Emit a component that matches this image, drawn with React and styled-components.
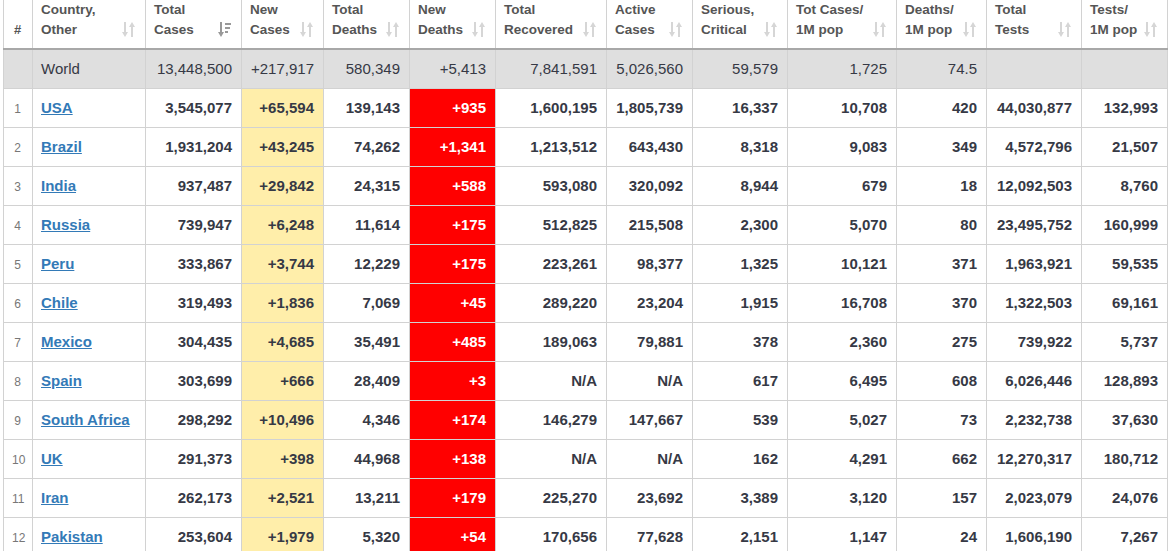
import React from "react";
import styled, { createGlobalStyle } from "styled-components";

const Global = createGlobalStyle`
  html, body { margin: 0; padding: 0; overflow: hidden; background: #fff; }
  body { font-family: "Liberation Sans", Arial, sans-serif; }
`;

const Wrap = styled.div`
  padding-left: 3px;
`;

const Table = styled.table`
  border-collapse: collapse;
  table-layout: fixed;
  width: 1165px;
  color: #363945;
`;

const Th = styled.th`
  border: 1px solid #d2d2d2;
  border-top: none;
  border-bottom: 2px solid #a8a8a8;
  height: 49px;
  padding: 0 9px 0 8px;
  vertical-align: top;
  text-align: ${(p) => (p.$center ? "center" : "left")};
  font-size: 13.5px;
  line-height: 19.5px;
  font-weight: bold;
  color: #555;
  box-sizing: border-box;
`;

const RankHead = styled.div`
  padding-top: 20px;
  font-size: 13px;
`;

const HeadInner = styled.div`
  display: flex;
  justify-content: space-between;
  align-items: flex-end;
  height: 39px;
`;

const HeadText = styled.div`
  white-space: nowrap;
`;

const SortIcon = styled.svg`
  flex: none;
  width: 14px;
  height: 15px;
  margin-bottom: 2px;
  fill: ${(p) => (p.$active ? "#999" : "#d6d6d6")};
`;

const Tr = styled.tr`
  background: ${(p) => (p.$world ? "#dfdfdf" : "#fff")};
`;

const Td = styled.td`
  border: 1px solid #d2d2d2;
  height: 39px;
  padding: ${(p) => (p.$world ? "0 9px 1px 8px" : "0 9px 0 8px")};
  box-sizing: border-box;
  vertical-align: middle;
  text-align: ${(p) => (p.$left ? "left" : p.$center ? "center" : "right")};
  white-space: nowrap;
  overflow: hidden;
  font-size: 15px;
  font-weight: ${(p) => (p.$world ? "normal" : "bold")};
  color: ${(p) => (p.$tone === "red" ? "#fff" : "#363945")};
  background: ${(p) =>
    p.$tone === "yellow" ? "#ffeeaa" : p.$tone === "red" ? "#ff0000" : "transparent"};
`;

const Rank = styled.span`
  font-size: 12px;
  font-weight: normal;
  color: #777;
`;

const CountryLink = styled.a`
  color: #337ab7;
  text-decoration: underline;
  font-weight: bold;
`;

const SortArrows = ({ active }) =>
  active ? (
    <SortIcon $active viewBox="0 0 14 15">
      <rect x="2" y="0" width="2" height="11" />
      <polygon points="0,10 6,10 3,15" />
      <rect x="7" y="1" width="6" height="2" />
      <rect x="7" y="5" width="5" height="2" />
      <rect x="7" y="9" width="3" height="2" />
    </SortIcon>
  ) : (
    <SortIcon viewBox="0 0 14 15">
      <rect x="2" y="0" width="2" height="11" />
      <polygon points="0,10 6,10 3,15" />
      <polygon points="7,5 13,5 10,0" />
      <rect x="9" y="4" width="2" height="11" />
    </SortIcon>
  );

const widths = [29, 113, 96, 82, 86, 86, 111, 86, 95, 109, 90, 95, 86];

const headers = [
  ["Country,", "Other"],
  ["Total", "Cases", true],
  ["New", "Cases"],
  ["Total", "Deaths"],
  ["New", "Deaths"],
  ["Total", "Recovered"],
  ["Active", "Cases"],
  ["Serious,", "Critical"],
  ["Tot Cases/", "1M pop"],
  ["Deaths/", "1M pop"],
  ["Total", "Tests"],
  ["Tests/", "1M pop"],
];

const world = ["World", "13,448,500", "+217,917", "580,349", "+5,413", "7,841,591", "5,026,560", "59,579", "1,725", "74.5", "", ""];

const rows = [
  ["USA", "3,545,077", "+65,594", "139,143", "+935", "1,600,195", "1,805,739", "16,337", "10,708", "420", "44,030,877", "132,993"],
  ["Brazil", "1,931,204", "+43,245", "74,262", "+1,341", "1,213,512", "643,430", "8,318", "9,083", "349", "4,572,796", "21,507"],
  ["India", "937,487", "+29,842", "24,315", "+588", "593,080", "320,092", "8,944", "679", "18", "12,092,503", "8,760"],
  ["Russia", "739,947", "+6,248", "11,614", "+175", "512,825", "215,508", "2,300", "5,070", "80", "23,495,752", "160,999"],
  ["Peru", "333,867", "+3,744", "12,229", "+175", "223,261", "98,377", "1,325", "10,121", "371", "1,963,921", "59,535"],
  ["Chile", "319,493", "+1,836", "7,069", "+45", "289,220", "23,204", "1,915", "16,708", "370", "1,322,503", "69,161"],
  ["Mexico", "304,435", "+4,685", "35,491", "+485", "189,063", "79,881", "378", "2,360", "275", "739,922", "5,737"],
  ["Spain", "303,699", "+666", "28,409", "+3", "N/A", "N/A", "617", "6,495", "608", "6,026,446", "128,893"],
  ["South Africa", "298,292", "+10,496", "4,346", "+174", "146,279", "147,667", "539", "5,027", "73", "2,232,738", "37,630"],
  ["UK", "291,373", "+398", "44,968", "+138", "N/A", "N/A", "162", "4,291", "662", "12,270,317", "180,712"],
  ["Iran", "262,173", "+2,521", "13,211", "+179", "225,270", "23,692", "3,389", "3,120", "157", "2,023,079", "24,076"],
  ["Pakistan", "253,604", "+1,979", "5,320", "+54", "170,656", "77,628", "2,151", "1,147", "24", "1,606,190", "7,267"],
];

export default function App() {
  return (
    <Wrap>
      <Global />
      <Table>
        <colgroup>
          {widths.map((w, i) => (
            <col key={i} style={{ width: w }} />
          ))}
        </colgroup>
        <thead>
          <tr>
            <Th $center>
              <RankHead>#</RankHead>
            </Th>
            {headers.map(([a, b, active], i) => (
              <Th key={i}>
                <HeadInner>
                  <HeadText>
                    {a}
                    <br />
                    {b}
                  </HeadText>
                  <SortArrows active={active} />
                </HeadInner>
              </Th>
            ))}
          </tr>
        </thead>
        <tbody>
          <Tr $world>
            <Td $world />
            {world.map((v, i) => (
              <Td key={i} $world $left={i === 0}>
                {v}
              </Td>
            ))}
          </Tr>
          {rows.map((r, ri) => (
            <Tr key={ri}>
              <Td $center>
                <Rank>{ri + 1}</Rank>
              </Td>
              {r.map((v, i) =>
                i === 0 ? (
                  <Td key={i} $left>
                    <CountryLink href="#">{v}</CountryLink>
                  </Td>
                ) : (
                  <Td key={i} $tone={i === 2 ? "yellow" : i === 4 ? "red" : undefined}>
                    {v}
                  </Td>
                )
              )}
            </Tr>
          ))}
        </tbody>
      </Table>
    </Wrap>
  );
}
